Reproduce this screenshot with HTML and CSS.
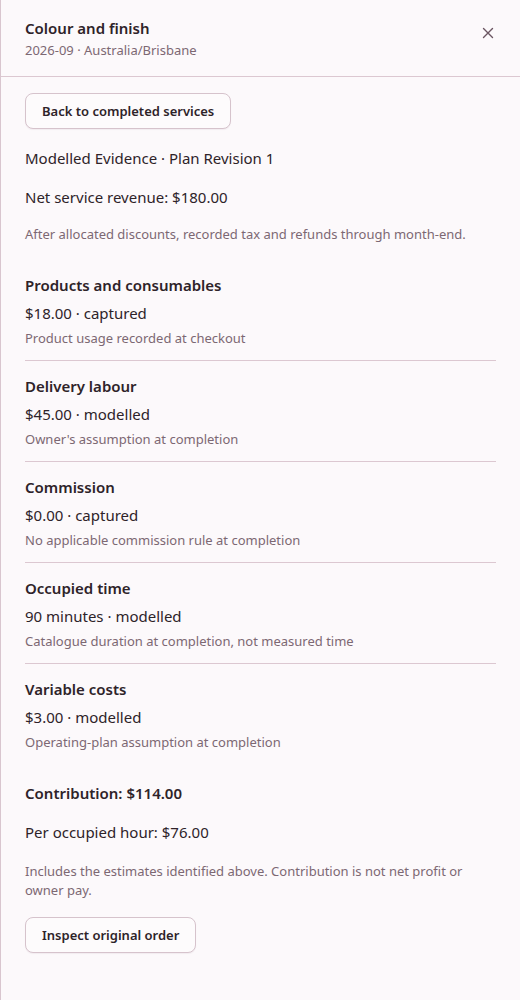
FILE: index.html
```html
<!DOCTYPE html>
<html lang="en">
<head>
<meta charset="utf-8">
<title>Colour and finish</title>
<link rel="stylesheet" href="styles.css">
</head>
<body>
<aside class="panel">
  <header class="panel-header">
    <div class="titles">
      <h1 class="title">Colour and finish</h1>
      <p class="subtitle">2026-09 · Australia/Brisbane</p>
    </div>
    <button class="close" aria-label="Close">
      <svg width="12" height="12" viewBox="0 0 12 12"><path d="M1.5 1.5 L10.5 10.5 M10.5 1.5 L1.5 10.5" stroke="currentColor" stroke-width="1.4" stroke-linecap="round" fill="none"/></svg>
    </button>
  </header>
  <main class="content">
    <button class="btn">Back to completed services</button>
    <p class="line first">Modelled Evidence · Plan Revision 1</p>
    <p class="line">Net service revenue: $180.00</p>
    <p class="note">After allocated discounts, recorded tax and refunds through month-end.</p>

    <div class="sections">
      <section class="item">
        <h2 class="item-title">Products and consumables</h2>
        <p class="item-value">$18.00 · captured</p>
        <p class="item-note">Product usage recorded at checkout</p>
      </section>
      <section class="item">
        <h2 class="item-title">Delivery labour</h2>
        <p class="item-value">$45.00 · modelled</p>
        <p class="item-note">Owner's assumption at completion</p>
      </section>
      <section class="item">
        <h2 class="item-title">Commission</h2>
        <p class="item-value">$0.00 · captured</p>
        <p class="item-note">No applicable commission rule at completion</p>
      </section>
      <section class="item">
        <h2 class="item-title">Occupied time</h2>
        <p class="item-value">90 minutes · modelled</p>
        <p class="item-note">Catalogue duration at completion, not measured time</p>
      </section>
      <section class="item">
        <h2 class="item-title">Variable costs</h2>
        <p class="item-value">$3.00 · modelled</p>
        <p class="item-note">Operating-plan assumption at completion</p>
      </section>
    </div>

    <p class="line strong">Contribution: $114.00</p>
    <p class="line">Per occupied hour: $76.00</p>
    <p class="note note-last">Includes the estimates identified above. Contribution is not net profit or owner pay.</p>
    <button class="btn btn-last">Inspect original order</button>
  </main>
</aside>
</body>
</html>
```
FILE: styles.css
```css
* { box-sizing: border-box; }
html, body { margin: 0; padding: 0; }
body {
  background: #fcf9fb;
  font-family: "Noto Sans", "Open Sans", sans-serif;
  color: #2e2329;
}
.panel {
  min-height: 1000px;
  border-left: 1px solid #d9c6cf;
  background: #fcf9fb;
}
.panel-header {
  display: flex;
  justify-content: space-between;
  align-items: flex-start;
  padding: 18px 24px 17px 24px;
  border-bottom: 1px solid #dcc8d1;
}
.title {
  margin: 0;
  font-size: 15px;
  line-height: 20px;
  font-weight: 600;
  color: #2e2329;
}
.subtitle {
  margin: 3px 0 0;
  font-size: 13px;
  line-height: 18px;
  color: #7c6873;
}
.close {
  border: 0;
  background: transparent;
  padding: 0;
  margin: 8px 1px 0 0;
  width: 14px;
  height: 14px;
  display: flex;
  align-items: center;
  justify-content: center;
  color: #6b5561;
  cursor: pointer;
}
.content {
  padding: 16px 24px 40px 24px;
  display: flex;
  flex-direction: column;
  align-items: flex-start;
}
.btn {
  font-family: inherit;
  font-size: 13px;
  font-weight: 600;
  color: #2e2329;
  background: #fdfbfc;
  border: 1px solid #d6c3cc;
  border-radius: 8px;
  height: 36px;
  padding: 0 16px;
  box-shadow: 0 1px 1px rgba(80, 40, 60, 0.06);
  cursor: pointer;
}
.btn-last { margin-top: 17px; }
.line {
  margin: 17px 0 0;
  font-size: 15px;
  line-height: 22px;
}
.line.first { margin-top: 18px; }
.line.strong { font-weight: 600; margin-top: 18px; }
.note {
  margin: 17px 0 0;
  font-size: 13px;
  line-height: 19px;
  color: #7c6873;
}
.note.note-last { margin-top: 19px; }
.sections {
  align-self: stretch;
  margin-top: 16px;
}
.item {
  padding: 14px 0 12px;
  border-bottom: 1px solid #dcc8d1;
}
.item:last-child { border-bottom: 0; }
.item-title {
  margin: 0;
  font-size: 15px;
  line-height: 22px;
  font-weight: 600;
}
.item-value {
  margin: 6px 0 0;
  font-size: 15px;
  line-height: 22px;
}
.item-note {
  margin: 5px 0 0;
  font-size: 13px;
  line-height: 19px;
  color: #7c6873;
}
```
